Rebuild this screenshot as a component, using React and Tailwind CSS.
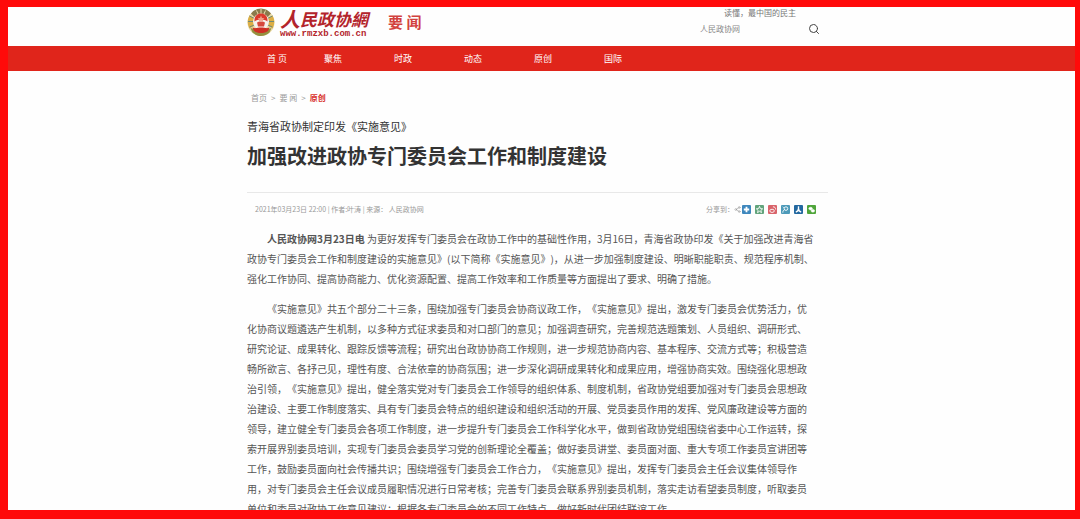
import { Search, Share2 } from 'lucide-react'

const navItems = ['聚焦', '时政', '动态', '原创', '国际']

const paragraph =
  '《实施意见》共五个部分二十三条，围绕加强专门委员会协商议政工作，《实施意见》提出，激发专门委员会优势活力，优化协商议题遴选产生机制，以多种方式征求委员和对口部门的意见；加强调查研究，完善规范选题策划、人员组织、调研形式、研究论证、成果转化、跟踪反馈等流程；研究出台政协协商工作规则，进一步规范协商内容、基本程序、交流方式等；积极营造畅所欲言、各抒己见，理性有度、合法依章的协商氛围；进一步深化调研成果转化和成果应用，增强协商实效。围绕强化思想政治引领，《实施意见》提出，健全落实党对专门委员会工作领导的组织体系、制度机制，省政协党组要加强对专门委员会思想政治建设、主要工作制度落实、具有专门委员会特点的组织建设和组织活动的开展、党员委员作用的发挥、党风廉政建设等方面的领导，建立健全专门委员会各项工作制度，进一步提升专门委员会工作科学化水平，做到省政协党组围绕省委中心工作运转，探索开展界别委员培训，实现专门委员会委员学习党的创新理论全覆盖；做好委员讲堂、委员面对面、重大专项工作委员宣讲团等工作，鼓励委员面向社会传播共识；围绕增强专门委员会工作合力，《实施意见》提出，发挥专门委员会主任会议集体领导作用，对专门委员会主任会议成员履职情况进行日常考核；完善专门委员会联系界别委员机制，落实走访看望委员制度，听取委员单位和委员对政协工作意见建议；根据各专门委员会的不同工作特点，做好新时代团结联谊工作。'

const Emblem = () => (
  <svg viewBox="0 0 56 60" className="h-[30px] w-7 shrink-0" aria-hidden="true">
    <circle cx="28" cy="31" r="27" fill="#e9d9a6" />
    <path d="M28 3a27 27 0 0 1 20 10l-9 9a15 15 0 0 0-22 0L8 13A27 27 0 0 1 28 3z" fill="#8a7a4c" />
    <path d="M5 17a27 27 0 0 0 0 26l10-6a15 15 0 0 1 0-14z" fill="#dcae45" />
    <path d="M51 17a27 27 0 0 1 0 26l-10-6a15 15 0 0 0 0-14z" fill="#dcae45" />
    <path d="M5 18l10 5M2 29h11M5 40l10-4M51 18l-10 5M54 29H43M51 40l-10-4" stroke="#6f8a78" strokeWidth="2" />
    <path d="M19 7l4 9M37 7l-4 9M28 4v10" stroke="#e9dfae" strokeWidth="2" />
    <circle cx="28" cy="29" r="16" fill="#f7f1ec" />
    <path d="M15 29c-1-11 6-16 13-16s14 5 13 16c-4-3-8-4-13-4s-9 1-13 4z" fill="#dc3a2c" />
    <path d="M28 17l2 5h5l-4 3 2 5-5-3-5 3 2-5-4-3h5z" fill="#f0a08a" />
    <path d="M20 31c5-3 11-3 16 0l-2 8H22z" fill="#d6483c" />
    <path d="M7 42c7 3 11 0 21 0s14 3 21 0l-4 9c-5 4-10 7-17 7s-12-3-17-7z" fill="#94903f" />
    <path d="M11 41c6 3 10 0 17 0s11 3 17 0l-3 7c-5 3-8 4-14 4s-9-1-14-4z" fill="#cf2f25" />
  </svg>
)

const shareTargets = [
  { name: '更多', bg: 'bg-[#3e87bd]', path: <path d="M10 4v12M4 10h12" strokeWidth="4" /> },
  { name: 'QQ空间', bg: 'bg-[#62a47c]', path: <path d="M10 3l2 5 5 .5-4 3.500 1.500 5L10 14l-4.500 3L7 12 3 8.500 8 8z" strokeWidth="2" /> },
  {
    name: '新浪微博',
    bg: 'bg-[#d9646b]',
    path: (
      <>
        <ellipse cx="9" cy="13" rx="5" ry="3.500" strokeWidth="2" />
        <path d="M11 4c4 0 6 2 6 6" strokeWidth="2" />
      </>
    ),
  },
  {
    name: '腾讯微博',
    bg: 'bg-[#4d9ab9]',
    path: (
      <>
        <circle cx="11" cy="8" r="4" strokeWidth="2" />
        <path d="M8 10c-3 2-4 4-4 7M4 4l2 2" strokeWidth="2" />
      </>
    ),
  },
  { name: '人人网', bg: 'bg-[#2368a0]', path: <path d="M10 3v5c0 4-3 7-6 8M10 8c0 4 3 7 6 8" strokeWidth="3" /> },
  {
    name: '微信',
    bg: 'bg-[#4fa53a]',
    path: (
      <>
        <ellipse cx="8" cy="8" rx="4" ry="3" fill="#fff" />
        <ellipse cx="13" cy="13" rx="4" ry="3" fill="#fff" />
      </>
    ),
  },
]

const Header = () => (
  <header>
    <div className="mx-auto flex h-[39px] w-full max-w-[589px] justify-between pr-2">
      <div className="flex">
        <a href="#home" className="flex">
          <Emblem />
          <span className="ml-[5px] flex flex-col text-[#b3242b]">
            <span className="flex h-[23px] items-center font-bold italic">
              <span className="text-[20px] leading-[23px]">人</span>
              <span className="text-[17px] leading-[23px]">民政协網</span>
            </span>
            <span className="font-['Liberation_Mono',monospace] text-[9px] font-bold leading-[9px]">www.rmzxb.com.cn</span>
          </span>
        </a>
        <span className="ml-5 h-[30px] text-[15px] font-bold leading-[30px] text-[#d2423f]">要 闻</span>
      </div>
      <form className="flex w-32 flex-col" onSubmit={(e) => e.preventDefault()}>
        <p className="pl-6 text-[8px] leading-[11px] text-[#777]">读懂，最中国的民主</p>
        <div className="flex h-[22px] items-center justify-between">
          <input
            type="text"
            aria-label="搜索"
            placeholder="人民政协网"
            className="w-24 text-[8px] leading-3 outline-none placeholder:text-[#888]"
          />
          <button type="submit" aria-label="搜索" className="mr-2 text-[#444]">
            <Search size={12} strokeWidth={2} />
          </button>
        </div>
      </form>
    </div>
    <nav className="bg-[#e0251b]">
      <ul className="mx-auto flex w-full max-w-[589px] pl-5 text-[9px] leading-[25px] text-white">
        <li className="w-[57px]">
          <a href="#index">首 页</a>
        </li>
        {navItems.map((item) => (
          <li key={item} className="w-[70px]">
            <a href={`#${item}`}>{item}</a>
          </li>
        ))}
      </ul>
    </nav>
  </header>
)

const ShareBar = () => (
  <div className="flex items-center">
    <span>分享到：</span>
    <Share2 size={7} className="mr-px" />
    <div className="flex gap-1">
      {shareTargets.map((s) => (
        <button key={s.name} type="button" aria-label={s.name} className={`flex size-[9px] items-center justify-center rounded-[1px] ${s.bg}`}>
          <svg viewBox="0 0 20 20" className="size-[9px]" fill="none" stroke="#fff">
            {s.path}
          </svg>
        </button>
      ))}
    </div>
  </div>
)

const App = () => {
  return (
    <div className="h-screen overflow-hidden bg-[#ff0a0a] font-['Noto_Sans_CJK_SC',sans-serif] [text-spacing-trim:space-all]">
      <div className="h-full overflow-hidden border-t-[7px] border-r-[5px] border-b-[9px] border-l-8 border-[#ff0a0a] bg-[#fefefe]">
        <Header />
        <main className="mx-auto w-full max-w-[589px] pr-2">
          <div className="flex gap-1 pt-5 pl-1 text-[8px] leading-[14px] text-[#999]">
            <a href="#index">首页</a>
            <span>&gt;</span>
            <a href="#news">要 闻</a>
            <span>&gt;</span>
            <a href="#original" className="font-bold text-[#d8302a]">原创</a>
          </div>
          <article>
            <p className="mt-[11px] text-[11px] leading-5 text-[#333]">青海省政协制定印发《实施意见》</p>
            <h1 className="mt-1 text-[20px] leading-8 font-bold text-[#333]">加强改进政协专门委员会工作和制度建设</h1>
            <div className="mt-5 flex items-center justify-between border-t border-[#e8e8e8] pt-2 pr-3 pl-2 text-[7px] leading-4 text-[#999]">
              <span>2021年03月23日 22:00 | 作者:叶涛 | 来源： 人民政协网</span>
              <ShareBar />
            </div>
            <div className="mt-3 pr-3 text-[10px] leading-5 text-[#555]">
              <p className="indent-5">
                <strong>人民政协网3月23日电</strong>{' '}
                为更好发挥专门委员会在政协工作中的基础性作用，3月16日，青海省政协印发《关于加强改进青海省政协专门委员会工作和制度建设的实施意见》(以下简称《实施意见》)，从进一步加强制度建设、明晰职能职责、规范程序机制、强化工作协同、提高协商能力、优化资源配置、提高工作效率和工作质量等方面提出了要求、明确了措施。
              </p>
              <p className="mt-[10px] indent-5">{paragraph}</p>
            </div>
          </article>
        </main>
      </div>
    </div>
  )
}

export default App
